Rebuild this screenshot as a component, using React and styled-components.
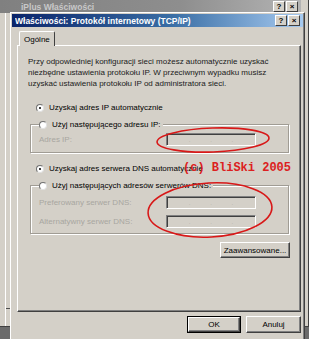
import React from 'react';
import styled, { createGlobalStyle } from 'styled-components';

const GlobalStyle = createGlobalStyle`
  html, body {
    margin: 0;
    padding: 0;
    background: #6b6b6b;
  }
  #root {
    width: 309px;
    height: 339px;
    overflow: hidden;
  }
`;

const face = '#d4d0c8';

const Desktop = styled.div`
  position: relative;
  width: 309px;
  height: 339px;
  overflow: hidden;
  background: #6b6b6b;
  font-family: 'Liberation Sans', Arial, sans-serif;
  font-size: 8px;
  color: #000;
`;

const BackWindow = styled.div`
  position: absolute;
  left: -2px;
  top: -2px;
  width: 309px;
  height: 327px;
  background: ${face};
  border: 1px solid #fff;
  border-right-color: #404040;
  border-bottom-color: #404040;
  display: flex;
  flex-direction: column;
`;

const BackBody = styled.div`
  flex: 1;
  margin-left: 6px;
  border-left: 1px solid #fff;
  position: relative;
`;

const BackDash = styled.div`
  position: absolute;
  left: 0;
  top: 295px;
  width: 5px;
  height: 1px;
  background: #505050;
`;

const TitleBar = styled.div`
  height: ${({ $h }) => $h}px;
  margin: ${({ $m }) => $m};
  display: flex;
  align-items: center;
  padding: 0 3px 0 ${({ $pl }) => $pl}px;
  background: ${({ $active }) =>
    $active
      ? 'linear-gradient(to right, #0a246a, #3a6ea5 55%, #a6caf0)'
      : 'linear-gradient(to right, #808080, #8e8e8e 60%, #b4b4b4)'};
  color: ${({ $active }) => ($active ? '#fff' : '#c8c8c8')};
  font-weight: bold;
  font-size: 8.5px;
  white-space: nowrap;
`;

const TitleText = styled.span`
  flex: 1;
  overflow: hidden;
`;

const TitleButtons = styled.div`
  display: flex;
  gap: 1px;
`;

const CaptionButton = styled.div`
  width: 10px;
  height: 9px;
  background: ${face};
  border: 1px solid #fff;
  border-right-color: #404040;
  border-bottom-color: #404040;
  display: flex;
  align-items: center;
  justify-content: center;
  color: #000;
  font-size: 8px;
  font-weight: bold;
  line-height: 1;
`;

const Dialog = styled.div`
  position: absolute;
  left: 10px;
  top: 12px;
  width: 293px;
  height: 330px;
  background: ${face};
  border: 1px solid #fff;
  border-right-color: #404040;
  border-bottom-color: #404040;
  box-shadow: inset -1px -1px 0 #808080;
  display: flex;
  flex-direction: column;
`;

const DialogBody = styled.div`
  padding: 3px 3px 0 6px;
  display: flex;
  flex-direction: column;
`;

const TabRow = styled.div`
  display: flex;
  padding-left: 2px;
  height: 15px;
  align-items: flex-end;
`;

const Tab = styled.div`
  height: 14px;
  padding: 0 4px;
  display: flex;
  align-items: center;
  border: 1px solid #fff;
  border-bottom: none;
  border-right: 1px solid #404040;
  border-radius: 2px 2px 0 0;
  background: ${face};
  margin-bottom: -1px;
  position: relative;
  z-index: 1;
`;

const Panel = styled.div`
  position: relative;
  box-sizing: border-box;
  height: 267px;
  border: 1px solid #fff;
  border-right-color: #404040;
  border-bottom-color: #404040;
  box-shadow: inset -1px -1px 0 #808080;
  padding: 10px 10px 0 10px;
  display: flex;
  flex-direction: column;
`;

const Intro = styled.p`
  margin: 0;
  line-height: 11px;
  color: #202020;
`;

const RadioRow = styled.div`
  display: flex;
  align-items: center;
  gap: 5px;
  height: 11px;
  margin-left: ${({ $ml }) => $ml || 0}px;
  margin-top: ${({ $mt }) => $mt || 0}px;
  background: ${({ $legend }) => ($legend ? face : 'transparent')};
  padding-right: ${({ $legend }) => ($legend ? 2 : 0)}px;
  width: max-content;
`;

const Radio = styled.span`
  width: 6px;
  height: 6px;
  border-radius: 50%;
  background: #fff;
  border: 1px solid #707070;
  border-right-color: #e0e0e0;
  border-bottom-color: #e0e0e0;
  display: flex;
  align-items: center;
  justify-content: center;
  &::after {
    content: '';
    width: 2px;
    height: 2px;
    border-radius: 50%;
    background: ${({ $on }) => ($on ? '#000' : 'transparent')};
  }
`;

const Group = styled.div`
  position: relative;
  margin: 11px 0 0 2px;
  width: 259px;
  height: ${({ $h }) => $h}px;
  border: 1px solid #a09c94;
  box-shadow: inset 1px 1px 0 #fff, 1px 1px 0 #fff;
  display: flex;
  flex-direction: column;
  padding: 0 0 0 8px;
  box-sizing: border-box;
`;

const Legend = styled.div`
  margin-top: -6px;
`;

const FieldRow = styled.div`
  display: flex;
  align-items: center;
  justify-content: space-between;
  height: 14px;
  margin-top: ${({ $mt }) => $mt}px;
  padding-right: 32px;
`;

const FieldLabel = styled.span`
  color: #a8a6a0;
`;

const IpBox = styled.div`
  box-sizing: border-box;
  width: 90px;
  height: 13px;
  border: 1px solid #808080;
  border-right-color: #fff;
  border-bottom-color: #fff;
  box-shadow: inset 1px 1px 0 #404040;
  background: ${face};
  display: flex;
  justify-content: space-around;
  align-items: flex-end;
  padding: 0 12px 2px;
  color: #b0aca4;
  font-size: 6px;
  line-height: 6px;
`;

const Advanced = styled.div`
  align-self: flex-end;
  margin-top: 8px;
  width: 68px;
  height: 14px;
  border: 1px solid #fff;
  border-right-color: #404040;
  border-bottom-color: #404040;
  box-shadow: inset -1px -1px 0 #808080;
  display: flex;
  align-items: center;
  justify-content: center;
`;

const Footer = styled.div`
  display: flex;
  justify-content: flex-end;
  align-items: center;
  gap: 5px;
  padding-top: 4px;
`;

const PushButton = styled.div`
  width: ${({ $default }) => ($default ? 50 : 53)}px;
  height: ${({ $default }) => ($default ? 13 : 15)}px;
  border: 1px solid #fff;
  border-right-color: #404040;
  border-bottom-color: #404040;
  box-shadow: inset -1px -1px 0 #808080;
  outline: ${({ $default }) => ($default ? '1px solid #000' : 'none')};
  margin: ${({ $default }) => ($default ? '1px' : '0')};
  display: flex;
  align-items: center;
  justify-content: center;
`;

const Overlay = styled.svg`
  position: absolute;
  left: 0;
  top: 0;
  pointer-events: none;
`;

const Stamp = styled.div`
  position: absolute;
  left: 165px;
  top: 115px;
  font-family: 'Liberation Mono', 'Courier New', monospace;
  font-weight: bold;
  font-size: 12px;
  color: #dc2020;
  white-space: pre;
  line-height: 14px;
`;

function IpField() {
  return (
    <IpBox>
      <span>.</span>
      <span>.</span>
      <span>.</span>
    </IpBox>
  );
}

function Captions() {
  return (
    <TitleButtons>
      <CaptionButton>?</CaptionButton>
      <CaptionButton>×</CaptionButton>
    </TitleButtons>
  );
}

export default function App() {
  return (
    <>
      <GlobalStyle />
      <Desktop>
        <BackWindow>
          <TitleBar $h={13} $m="1px 7px 0 1px" $pl={21}>
            <TitleText>iPlus Właściwości</TitleText>
            <Captions />
          </TitleBar>
          <BackBody>
            <BackDash />
          </BackBody>
        </BackWindow>

        <Dialog>
          <TitleBar $h={13} $m="1px 1px 0 1px" $pl={3} $active>
            <TitleText>Właściwości: Protokół internetowy (TCP/IP)</TitleText>
            <Captions />
          </TitleBar>
          <DialogBody>
            <TabRow>
              <Tab>Ogólne</Tab>
            </TabRow>
            <Panel>
              <Intro>
                Przy odpowiedniej konfiguracji sieci możesz automatycznie uzyskać
                <br />
                niezbędne ustawienia protokołu IP. W przeciwnym wypadku musisz
                <br />
                uzyskać ustawienia protokołu IP od administratora sieci.
              </Intro>

              <RadioRow $ml={8} $mt={13}>
                <Radio $on />
                Uzyskaj adres IP automatycznie
              </RadioRow>

              <Group $h={29}>
                <Legend>
                  <RadioRow $legend>
                    <Radio />
                    Użyj następującego adresu IP:
                  </RadioRow>
                </Legend>
                <FieldRow $mt={2}>
                  <FieldLabel>Adres IP:</FieldLabel>
                  <IpField />
                </FieldRow>
              </Group>

              <RadioRow $ml={8} $mt={10}>
                <Radio $on />
                Uzyskaj adres serwera DNS automatycznie
              </RadioRow>

              <Group $h={49}>
                <Legend>
                  <RadioRow $legend>
                    <Radio />
                    Użyj następujących adresów serwerów DNS:
                  </RadioRow>
                </Legend>
                <FieldRow $mt={4}>
                  <FieldLabel>Preferowany serwer DNS:</FieldLabel>
                  <IpField />
                </FieldRow>
                <FieldRow $mt={5}>
                  <FieldLabel>Alternatywny serwer DNS:</FieldLabel>
                  <IpField />
                </FieldRow>
              </Group>

              <Advanced>Zaawansowane...</Advanced>

              <Stamp>(c) BliSki 2005</Stamp>
            </Panel>
            <Footer>
              <PushButton $default>OK</PushButton>
              <PushButton>Anuluj</PushButton>
            </Footer>
          </DialogBody>
          <Overlay width="293" height="330" viewBox="0 0 293 330">
            <ellipse cx="202" cy="127" rx="56" ry="12" fill="none" stroke="#d81818" strokeWidth="1.6" transform="rotate(-2 202 127)" />
            <ellipse cx="199" cy="197" rx="62" ry="27" fill="none" stroke="#d81818" strokeWidth="1.6" transform="rotate(-3 199 197)" />
          </Overlay>
        </Dialog>
      </Desktop>
    </>
  );
}
